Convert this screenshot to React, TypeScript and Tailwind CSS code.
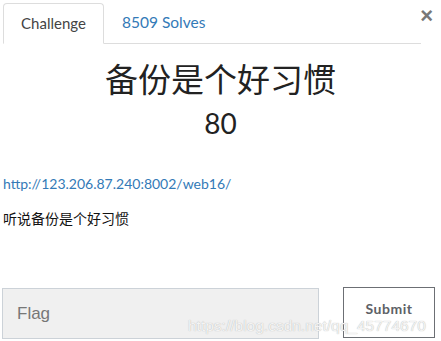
export default function App() {
  return (
    <div className="relative w-[441px] h-[341px] bg-white overflow-hidden font-['Lato','Noto_Sans_CJK_SC',sans-serif] text-[#333]">
      {/* close */}
      <button className="absolute right-[8px] top-[5px] text-[22px] leading-none font-bold text-[#777] font-['Liberation_Sans',sans-serif]">
        ×
      </button>

      {/* tabs */}
      <div className="flex ml-[3px] mr-[20px] mt-[3px] border-b border-[#ddd] h-[41px]">
        <div className="w-[101px] -mb-px border border-[#ddd] border-b-white rounded-t-[4px] bg-white flex items-center justify-center text-[15px] text-[#444]">
          Challenge
        </div>
        <div className="px-[18px] flex items-center text-[15.5px] text-[#337ab7]">8509 Solves</div>
      </div>

      {/* title */}
      <div className="text-center mt-[14px]">
        <h2 className="text-[33px] leading-[40px] text-[#222] font-['Noto_Sans_CJK_SC',sans-serif]">备份是个好习惯</h2>
        <h4 className="text-[28px] leading-[34px] mt-[8px] text-[#222]">80</h4>
      </div>

      {/* description */}
      <div className="mt-[33px] px-[3px] text-[14px]">
        <a className="text-[#337ab7]">http://123.206.87.240:8002/web16/</a>
        <p className="mt-[14px] text-[#111] font-['Noto_Sans_CJK_SC',sans-serif]">听说备份是个好习惯</p>
      </div>

      {/* flag form */}
      <div className="absolute left-[2px] right-[6px] top-[287px] flex items-start">
        <div className="w-[317px] h-[51px] mt-[1px] bg-[#f0f0f0] border border-[#ccd2d8] flex items-center pl-[14px] text-[17px] text-[#777] font-['Liberation_Sans',sans-serif]">
          Flag
        </div>
        <div className="ml-auto w-[92px] h-[51px] border border-[#6c6f74] flex items-start justify-center pt-[13px] text-[14px] leading-[16px] font-bold text-[#5d6166] tracking-[0.5px]">
          Submit
        </div>
      </div>

      {/* watermark */}
      <div className="absolute left-[188px] top-[318px] text-[15.5px] leading-[15px] text-[#f4f4f4] font-['Liberation_Sans',sans-serif] [text-shadow:0_0_1px_#aaa] pointer-events-none whitespace-nowrap">
        https://blog.csdn.net/qq_45774670
      </div>
    </div>
  );
}
